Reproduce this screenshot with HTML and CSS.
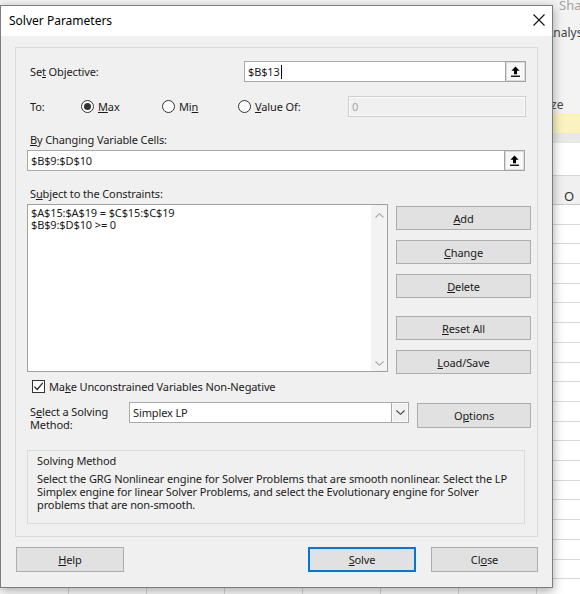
FILE: index.html
```html
<!DOCTYPE html>
<html>
<head>
<meta charset="utf-8">
<title>Solver Parameters</title>
<link rel="stylesheet" href="styles.css">
</head>
<body>
<div class="sheet">
  <div class="ribbon">
    <div class="rb-share">Share</div>
    <div class="rb-analysis">Data Analysis</div>
    <div class="rb-analyze">Analyze</div>
  </div>
  <div class="msgbar"></div>
  <div class="band"></div>
  <div class="blank"></div>
  <div class="colhead">O</div>
  <div class="grid"></div>
</div>

<div class="dialog">
  <div class="titlebar">
    <span class="title">Solver Parameters</span>
    <svg class="close" width="12" height="12" viewBox="0 0 12 12"><path d="M0.5 0.5 L11.5 11.5 M11.5 0.5 L0.5 11.5" stroke="#111" stroke-width="1.1" fill="none"/></svg>
  </div>
  <div class="dbody">
    <div class="panel">
      <div class="row-obj">
        <span class="lbl-obj">Se<u>t</u> Objective:</span>
        <div class="field w-obj">
          <span class="ftext">$B$13</span><span class="caret"></span>
          <span class="ref"><svg width="9" height="11" viewBox="0 0 9 11"><path d="M4.5 0.5 L8.6 4.8 H6 V8.2 H3 V4.8 H0.4 Z" fill="#000"/><rect x="0" y="9.6" width="9" height="1.3" fill="#000"/></svg></span>
        </div>
      </div>

      <div class="row-to">
        <span class="lbl-to">To:</span>
        <span class="radio r-max"><span class="dot on"></span><span><u>M</u>ax</span></span>
        <span class="radio r-min"><span class="dot"></span><span>Mi<u>n</u></span></span>
        <span class="radio r-val"><span class="dot"></span><span><u>V</u>alue Of:</span></span>
        <div class="field disabled w-val"><span class="ftext">0</span></div>
      </div>

      <div class="lbl-block"><u>B</u>y Changing Variable Cells:</div>
      <div class="field w-full">
        <span class="ftext">$B$9:$D$10</span>
        <span class="ref"><svg width="9" height="11" viewBox="0 0 9 11"><path d="M4.5 0.5 L8.6 4.8 H6 V8.2 H3 V4.8 H0.4 Z" fill="#000"/><rect x="0" y="9.6" width="9" height="1.3" fill="#000"/></svg></span>
      </div>

      <div class="lbl-block">S<u>u</u>bject to the Constraints:</div>
      <div class="cons">
        <div class="listbox">
          <div class="items">
            <div class="item">$A$15:$A$19 = $C$15:$C$19</div>
            <div class="item">$B$9:$D$10 &gt;= 0</div>
          </div>
          <div class="vscroll">
            <svg width="9" height="5" viewBox="0 0 9 5"><path d="M0.5 4.5 L4.5 0.7 L8.5 4.5" stroke="#a6a6a6" stroke-width="1.1" fill="none"/></svg>
            <svg width="9" height="5" viewBox="0 0 9 5"><path d="M0.5 0.5 L4.5 4.3 L8.5 0.5" stroke="#a6a6a6" stroke-width="1.1" fill="none"/></svg>
          </div>
        </div>
        <div class="btncol">
          <div class="btn"><span><u>A</u>dd</span></div>
          <div class="btn gap10"><span><u>C</u>hange</span></div>
          <div class="btn gap10"><span><u>D</u>elete</span></div>
          <div class="btn gap18"><span><u>R</u>eset All</span></div>
          <div class="btn gap10"><span><u>L</u>oad/Save</span></div>
        </div>
      </div>

      <div class="check">
        <span class="cbox"><svg width="11" height="11" viewBox="0 0 11 11"><path d="M1.3 5.6 L4.2 8.5 L9.8 1.8" stroke="#222" stroke-width="1.2" fill="none"/></svg></span>
        <span>Ma<u>k</u>e Unconstrained Variables Non-Negative</span>
      </div>

      <div class="method">
        <div class="lbl-method"><div>S<u>e</u>lect a Solving</div><div>Method:</div></div>
        <div class="select">
          <span class="ftext">Simplex LP</span>
          <span class="drop"><svg width="9" height="5" viewBox="0 0 9 5"><path d="M0.5 0.5 L4.5 4.3 L8.5 0.5" stroke="#444" stroke-width="1.1" fill="none"/></svg></span>
        </div>
        <div class="btn options"><span>O<u>p</u>tions</span></div>
      </div>

      <div class="info">
        <div class="info-title">Solving Method</div>
        <div class="info-text">
          <div>Select the GRG Nonlinear engine for Solver Problems that are smooth nonlinear. Select the LP</div>
          <div>Simplex engine for linear Solver Problems, and select the Evolutionary engine for Solver</div>
          <div>problems that are non-smooth.</div>
        </div>
      </div>
    </div>

    <div class="footer">
      <div class="btn fbtn help"><span><u>H</u>elp</span></div>
      <div class="spacer"></div>
      <div class="btn fbtn solve"><span><u>S</u>olve</span></div>
      <div class="btn fbtn close-btn"><span>Cl<u>o</u>se</span></div>
    </div>
  </div>
</div>
</body>
</html>
```

FILE: styles.css
```css
* { box-sizing: border-box; }

body {
  margin: 0;
  width: 580px;
  height: 594px;
  overflow: hidden;
  position: relative;
  background: #fff;
  font-family: "Noto Sans", "Open Sans", sans-serif;
  font-size: 11px;
  letter-spacing: -0.12px;
  color: #1b1b1b;
}

u { text-decoration: underline; text-underline-offset: 1px; }

/* ---------- background spreadsheet ---------- */
.sheet {
  display: flex;
  flex-direction: column;
  height: 594px;
  width: 580px;
}
.ribbon {
  height: 113px;
  background: #f3f3f3;
  white-space: nowrap;
  color: #444;
  font-size: 12px;
  letter-spacing: 0;
}
.rb-share {
  height: 12px;
  line-height: 10px;
  padding-left: 559px;
  color: #a3a3a3;
  font-size: 13px;
}
.rb-analysis {
  margin-top: 13px;
  line-height: 16px;
  padding-left: 516px;
}
.rb-analyze {
  margin-top: 56px;
  line-height: 16px;
  padding-left: 520px;
}
.msgbar { height: 20px; background: #fbf3bf; }
.band { height: 10px; background: #e8e8e8; }
.blank { height: 33px; background: #fff; border-bottom: 1px solid #d6d6d6; }
.colhead {
  height: 29px;
  background: #f0f0f0;
  border-bottom: 1px solid #c9c9c9;
  padding: 12px 0 0 564px;
  font-size: 13px;
  color: #333;
  line-height: 16px;
  white-space: nowrap;
}
.grid {
  flex: 1;
  background-color: #fff;
  background-image:
    repeating-linear-gradient(to bottom, transparent 0, transparent 18.7px, #d9d9d9 18.7px, #d9d9d9 19.7px),
    repeating-linear-gradient(to right, transparent 0, transparent 77px, #d9d9d9 77px, #d9d9d9 78px);
  background-position: 0 0, -9px 0;
}

/* ---------- dialog ---------- */
.dialog {
  position: absolute;
  left: 0;
  top: 5px;
  width: 553px;
  height: 583px;
  border: 1px solid #7d7d7d;
  background: #f0f0f0;
  box-shadow: 0 3px 10px rgba(0, 0, 0, 0.35);
  display: flex;
  flex-direction: column;
}
.titlebar {
  height: 30px;
  flex: none;
  background: #fff;
  display: flex;
  align-items: center;
  justify-content: space-between;
  padding: 0 7px 2px 8px;
}
.title { font-size: 12px; color: #000; letter-spacing: 0; }
.close { display: block; }

.dbody { padding: 11px 14px 0 14px; }

.panel {
  height: 490px;
  border: 1px solid #dadada;
  padding-left: 11px;
}

.field {
  background: #fff;
  border: 1px solid #a9a9a9;
  height: 21px;
  display: flex;
  align-items: center;
  padding-left: 3px;
  white-space: nowrap;
}
.ftext { line-height: 14px; }
.caret {
  width: 1px;
  height: 14px;
  background: #000;
  margin-left: 1px;
}
.ref {
  margin: -1px -1px -1px auto;
  width: 21px;
  height: 21px;
  border: 1px solid #a3a3a3;
  box-shadow: inset 0 0 0 1px #dcdcdc;
  background: #f7f7f7;
  display: flex;
  align-items: center;
  justify-content: center;
  flex: none;
}
.ref svg { display: block; }

.row-obj {
  margin-top: 13px;
  display: flex;
  align-items: center;
}
.lbl-obj { width: 217px; padding-left: 3px; flex: none; }
.w-obj { width: 282px; }

.row-to {
  margin-top: 14px;
  display: flex;
  align-items: center;
  height: 21px;
}
.lbl-to { width: 54px; padding-left: 3px; flex: none; }
.radio { display: flex; align-items: center; gap: 4px; flex: none; }
.r-max { width: 81px; }
.r-min { width: 76px; }
.r-val { width: 110px; }
.dot {
  width: 13px;
  height: 13px;
  border: 1px solid #333;
  border-radius: 50%;
  background: #fff;
  display: flex;
  align-items: center;
  justify-content: center;
  flex: none;
}
.dot.on::after {
  content: "";
  width: 7px;
  height: 7px;
  border-radius: 50%;
  background: #333;
}
.disabled {
  background: #f0f0f0;
  border-color: #cfcfcf;
  box-shadow: inset 0 0 0 1px #fbfbfb;
  color: #a6a6a6;
}
.w-val { width: 178px; }

.lbl-block {
  margin-top: 15px;
  line-height: 16px;
  padding-left: 3px;
}
.w-full { width: 498px; margin-top: 2px; padding-left: 3px; }

.cons {
  margin-top: 2px;
  display: flex;
  gap: 8px;
}
.listbox {
  width: 361px;
  height: 168px;
  border: 1px solid #a0a0a0;
  background: #fff;
  display: flex;
  flex: none;
}
.items {
  flex: 1;
  padding: 2px 3px;
  white-space: nowrap;
}
.item { height: 12px; line-height: 12px; }
.vscroll {
  width: 16px;
  background: #f3f3f3;
  display: flex;
  flex-direction: column;
  justify-content: space-between;
  align-items: center;
  padding: 8px 0 5px;
}
.vscroll svg { display: block; }

.btncol {
  width: 135px;
  padding-top: 2px;
  display: flex;
  flex-direction: column;
  flex: none;
}
.btn {
  height: 24px;
  background: #e1e1e1;
  border: 1px solid #adadad;
  display: flex;
  align-items: center;
  justify-content: center;
  white-space: nowrap;
  flex: none;
}
.gap10 { margin-top: 10px; }
.gap18 { margin-top: 18px; }

.check {
  margin-top: 4px;
  height: 16px;
  display: flex;
  align-items: center;
  gap: 4px;
  padding-left: 5px;
}
.cbox {
  width: 13px;
  height: 13px;
  border: 1px solid #333;
  background: #fff;
  display: flex;
  align-items: center;
  justify-content: center;
}
.cbox svg { display: block; }

.method {
  margin-top: 8px;
  display: flex;
  align-items: flex-start;
}
.lbl-method {
  width: 102px;
  padding-left: 3px;
  margin-top: 4px;
  flex: none;
}
.lbl-method div { height: 12.5px; line-height: 12.5px; }
.select {
  width: 280px;
  height: 21px;
  border: 1px solid #a9a9a9;
  background: #fff;
  display: flex;
  align-items: center;
  padding-left: 3px;
  flex: none;
}
.drop {
  margin: -1px -1px -1px auto;
  width: 18px;
  height: 21px;
  border: 1px solid #a9a9a9;
  background: #f0f0f0;
  box-shadow: inset 0 0 0 1px #fafafa;
  display: flex;
  align-items: center;
  justify-content: center;
}
.drop svg { display: block; }
.options {
  margin-left: 8px;
  margin-top: 1px;
  width: 114px;
  height: 25px;
}

.info {
  margin-top: 19px;
  width: 498px;
  height: 74px;
  border: 1px solid #dadada;
  padding: 3px 0 0 9px;
  white-space: nowrap;
}
.info-title { line-height: 13px; }
.info-text { margin-top: 5px; line-height: 13px; }

.footer {
  margin-top: 10px;
  display: flex;
  gap: 15px;
}
.fbtn { height: 25px; width: 108px; }
.help { margin-left: 1px; width: 108px; }
.spacer { flex: 1; }
.solve {
  border-color: #0078d7;
  box-shadow: inset 0 0 0 1px #0078d7;
}
.close-btn { width: 107px; }
```
